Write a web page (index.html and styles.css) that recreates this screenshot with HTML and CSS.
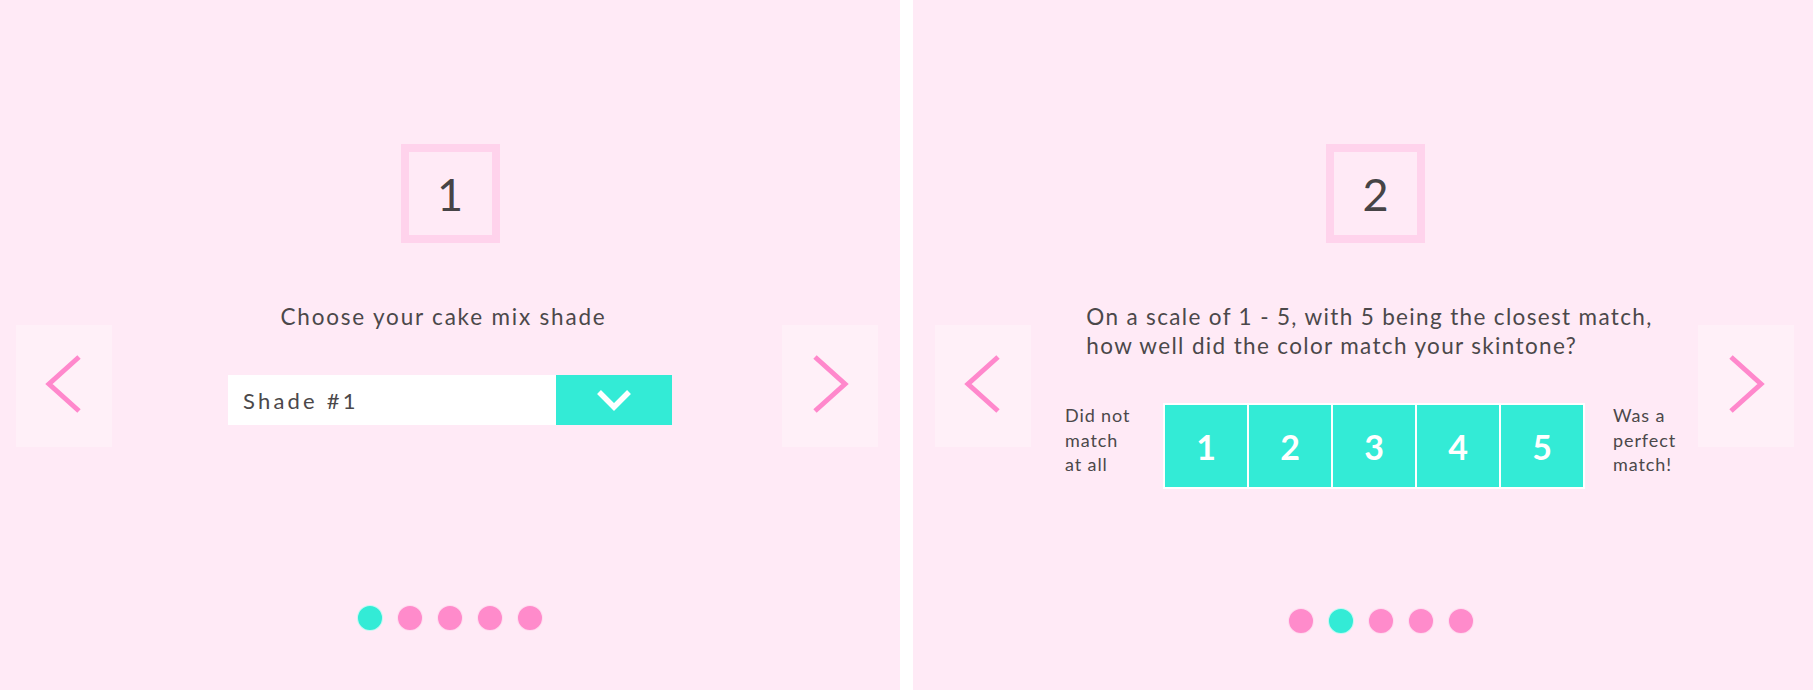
FILE: index.html
```html
<!DOCTYPE html>
<html lang="en">
<head>
<meta charset="utf-8">
<title>Shade quiz</title>
<link rel="stylesheet" href="styles.css">
</head>
<body>
<div class="screens">
  <section class="panel">
    <div class="step">1</div>
    <div class="stage">
      <button class="nav nav-prev" aria-label="Previous">
        <svg width="96" height="122" viewBox="0 0 96 122"><polyline points="63,32 33,59 63,86" /></svg>
      </button>
      <div class="content">
        <p class="question question-short">Choose your cake mix shade</p>
        <div class="select">
          <span class="select-value">Shade #1</span>
          <span class="select-btn">
            <svg width="36" height="24" viewBox="0 0 36 24"><polyline points="3,4 18,19 33,4" /></svg>
          </span>
        </div>
      </div>
      <button class="nav nav-next" aria-label="Next">
        <svg width="96" height="122" viewBox="0 0 96 122"><polyline points="33,32 63,59 33,86" /></svg>
      </button>
    </div>
    <div class="dots">
      <span class="dot active"></span><span class="dot"></span><span class="dot"></span><span class="dot"></span><span class="dot"></span>
    </div>
  </section>

  <section class="panel panel-two">
    <div class="step">2</div>
    <div class="stage">
      <button class="nav nav-prev" aria-label="Previous">
        <svg width="96" height="122" viewBox="0 0 96 122"><polyline points="63,32 33,59 63,86" /></svg>
      </button>
      <div class="content">
        <p class="question question-wide">On a scale of 1 - 5, with 5 being the closest match,<br>how well did the color match your skintone?</p>
        <div class="rating">
          <span class="rating-label rating-label-start">Did not<br>match<br>at all</span>
          <div class="scale">
            <span class="cell">1</span><span class="cell">2</span><span class="cell">3</span><span class="cell">4</span><span class="cell">5</span>
          </div>
          <span class="rating-label rating-label-end">Was a<br>perfect<br>match!</span>
        </div>
      </div>
      <button class="nav nav-next" aria-label="Next">
        <svg width="96" height="122" viewBox="0 0 96 122"><polyline points="33,32 63,59 33,86" /></svg>
      </button>
    </div>
    <div class="dots">
      <span class="dot"></span><span class="dot active"></span><span class="dot"></span><span class="dot"></span><span class="dot"></span>
    </div>
  </section>
</div>
</body>
</html>
```

FILE: styles.css
```css
html, body {
  margin: 0;
  padding: 0;
  background: #ffffff;
}

body {
  width: 1813px;
  height: 690px;
  overflow: hidden;
  font-family: "Lato", "Open Sans", sans-serif;
  color: #4b484a;
}

.screens {
  display: flex;
  gap: 13px;
  height: 690px;
}

.panel {
  width: 900px;
  height: 690px;
  box-sizing: border-box;
  background: #ffeaf6;
  display: flex;
  flex-direction: column;
  align-items: center;
  padding-top: 144px;
  padding-bottom: 59px;
}

.step {
  width: 99px;
  height: 99px;
  box-sizing: border-box;
  border: 8px solid #ffd3ec;
  display: flex;
  align-items: center;
  justify-content: center;
  font-size: 45px;
  color: #464446;
  line-height: 1;
  padding-top: 2px;
}

.panel-two .step {
  margin-left: 25px;
}

.stage {
  align-self: stretch;
  margin-top: 59px;
  display: grid;
  grid-template-columns: 96px 1fr 96px;
  align-items: start;
  padding: 0 22px 0 16px;
}

.panel-two .stage {
  padding: 0 19px 0 22px;
}

.nav {
  margin: 23px 0 0;
  padding: 0;
  width: 96px;
  height: 122px;
  border: 0;
  background: rgba(255, 255, 255, 0.28);
  display: block;
  cursor: pointer;
}

.nav svg {
  display: block;
}

.nav polyline {
  fill: none;
  stroke: #ff88cc;
  stroke-width: 5;
  stroke-linejoin: miter;
}

.content {
  display: flex;
  flex-direction: column;
  align-items: center;
}

.question {
  margin: 0;
  font-size: 22.5px;
  line-height: 29px;
  letter-spacing: 1.8px;
  color: #4b484a;
}

.question-short {
  margin-right: 7px;
}

.question-wide {
  letter-spacing: 1.35px;
  margin-left: 10px;
}

.select {
  margin-top: 44px;
  margin-left: 6px;
  width: 444px;
  height: 50px;
  display: flex;
  background: #ffffff;
}

.select-value {
  flex: 1;
  display: flex;
  align-items: center;
  padding-left: 15px;
  font-size: 22px;
  letter-spacing: 3.2px;
  color: #4b484a;
}

.select-btn {
  width: 116px;
  background: #33ebd6;
  display: flex;
  align-items: center;
  justify-content: center;
}

.select-btn polyline {
  fill: none;
  stroke: #ffffff;
  stroke-width: 5.5;
}

.rating {
  margin-top: 43px;
  margin-left: 17px;
  display: flex;
  align-items: center;
}

.rating-label {
  font-size: 18px;
  line-height: 24.5px;
  letter-spacing: 0.9px;
  color: #4b484a;
  margin-top: -12px;
}

.rating-label-start {
  width: 70px;
  padding: 0 28px 0 4px;
}

.rating-label-end {
  width: 72px;
  padding-left: 28px;
}

.scale {
  display: grid;
  grid-template-columns: repeat(5, 82px);
  gap: 2px;
  padding: 2px;
  background: #ffffff;
}

.cell {
  height: 82px;
  background: #33ebd6;
  color: #ffffff;
  font-weight: 700;
  font-size: 34px;
  display: flex;
  align-items: center;
  justify-content: center;
}

.dots {
  margin-top: auto;
  display: flex;
  gap: 14px;
}

.panel-two .dots {
  margin-left: 36px;
  margin-bottom: -3px;
}

.dot {
  width: 26px;
  height: 26px;
  box-sizing: border-box;
  border-radius: 50%;
  background: #ff8bcb;
  border: 1px solid rgba(255, 255, 255, 0.7);
}

.dot.active {
  background: #33ebd6;
}
```
